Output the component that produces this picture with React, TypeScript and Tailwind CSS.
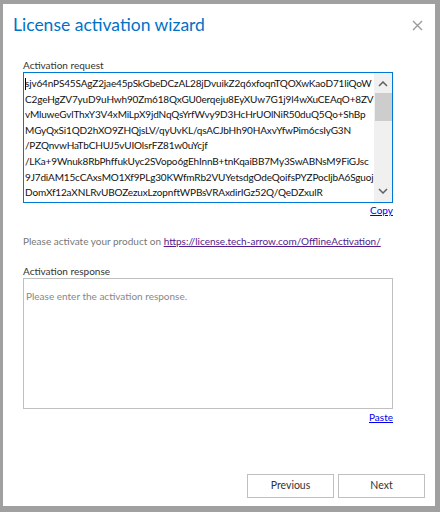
import React from 'react';

const requestLines = [
  'sjv64nPS45SAgZ2jae45pSkGbeDCzAL28jDvuikZ2q6xfoqnTQOXwKaoD71liQoW',
  'C2geHgZV7yuD9uHwh90Zm618QxGU0erqeju8EyXUw7G1j9l4wXuCEAqO+8ZVL',
  'vMluweGvlThxY3V4xMiLpX9jdNqQsYrfWvy9D3HcHrUOlNiR50duQ5Qo+ShBp',
  'MGyQxSi1QD2hXO9ZHQjsLV/qyUvKL/qsACJbHh90HAxvYfwPim6csIyG3N',
  '/PZQnvwHaTbCHUJ5vUIOlsrFZ81w0uYcjf',
  '/LKa+9Wnuk8RbPhffukUyc2SVopo6gEhInnB+tnKqaiBB7My3SwABNsM9FiGJsc',
  '9J7diAM15cCAxsMO1Xf9PLg30KWfmRb2VUYetsdgOdeQoifsPYZPocljbA6Sguoj',
  'DomXf12aXNLRvUBOZezuxLzopnftWPBsVRAxdirIGz52Q/QeDZxulR',
  'tMrAWVkZ9TTmKn3wQz4iNGRKabvPs8wEuH',
];

const font = { fontFamily: 'Lato, "Noto Sans", sans-serif' };

export default function App() {
  return (
    <div className="w-[440px] h-[512px] bg-[#a0a0a0] pt-[4px] pl-[3px] overflow-hidden" style={font}>
      <div className="relative w-[432px] h-[502px] bg-white flex flex-col">
        <div className="flex items-start justify-between pl-[10px] pr-[12px] pt-[8px]">
          <h1 className="text-[17.5px] leading-[26px] text-[#0072c6]">License activation wizard</h1>
          <svg className="mt-[8px]" width="11" height="11" viewBox="0 0 11 11">
            <path d="M1 1 L10 10 M10 1 L1 10" stroke="#9a9a9a" strokeWidth="1.4" />
          </svg>
        </div>

        <div className="flex flex-col pl-[20px] pr-[42px] mt-[21px]">
          <label className="text-[10px] leading-[13px] text-[#333]">Activation request</label>
          <div className="h-[131px] border border-[#0078d7] flex overflow-hidden">
            <div className="flex-1 relative pl-[1px] pt-[3px] overflow-hidden text-[10px] tracking-[-0.15px] leading-[15.6px] text-[#111]">
              <span className="absolute left-[1px] top-[5px] w-px h-[12px] bg-black" />
              {requestLines.map((line) => (
                <div key={line} className="whitespace-nowrap">{line}</div>
              ))}
            </div>
            <div className="w-[18px] bg-[#f0f0f0] flex flex-col items-center">
              <svg className="mt-[8px]" width="10" height="6" viewBox="0 0 10 6">
                <path d="M1 5 L5 1 L9 5" fill="none" stroke="#606060" strokeWidth="1.5" />
              </svg>
              <div className="mt-[6px] w-[17px] h-[28px] bg-[#cdcdcd]" />
              <div className="flex-1" />
              <svg className="mb-[8px]" width="10" height="6" viewBox="0 0 10 6">
                <path d="M1 1 L5 5 L9 1" fill="none" stroke="#606060" strokeWidth="1.5" />
              </svg>
            </div>
          </div>
          <div className="flex justify-end">
            <a className="text-[10px] leading-[14px] text-[#0000ee] underline">Copy</a>
          </div>

          <p className="mt-[17px] whitespace-nowrap text-[10px] leading-[14px] text-[#777]">
            Please activate your product on{' '}
            <a className="text-[#551a8b] underline">https://license.tech-arrow.com/OfflineActivation/</a>
          </p>

          <label className="mt-[17px] text-[10px] leading-[13px] text-[#333]">Activation response</label>
          <div className="h-[131px] border border-[#c0c0c0] px-[2px] py-[3px]">
            <span className="text-[10px] leading-[14px] text-[#888]">Please enter the activation response.</span>
          </div>
          <div className="flex justify-end mt-[1px]">
            <a className="text-[10px] leading-[14px] text-[#0000ee] underline">Paste</a>
          </div>
        </div>

        <div className="mt-auto flex justify-end gap-[4px] pr-[10px] pb-[8px]">
          <button className="w-[87px] h-[24px] border border-[#c0c0c0] bg-white text-[10.5px] text-[#333]">Previous</button>
          <button className="w-[87px] h-[24px] border border-[#c0c0c0] bg-white text-[10.5px] text-[#333]">Next</button>
        </div>
      </div>
    </div>
  );
}
